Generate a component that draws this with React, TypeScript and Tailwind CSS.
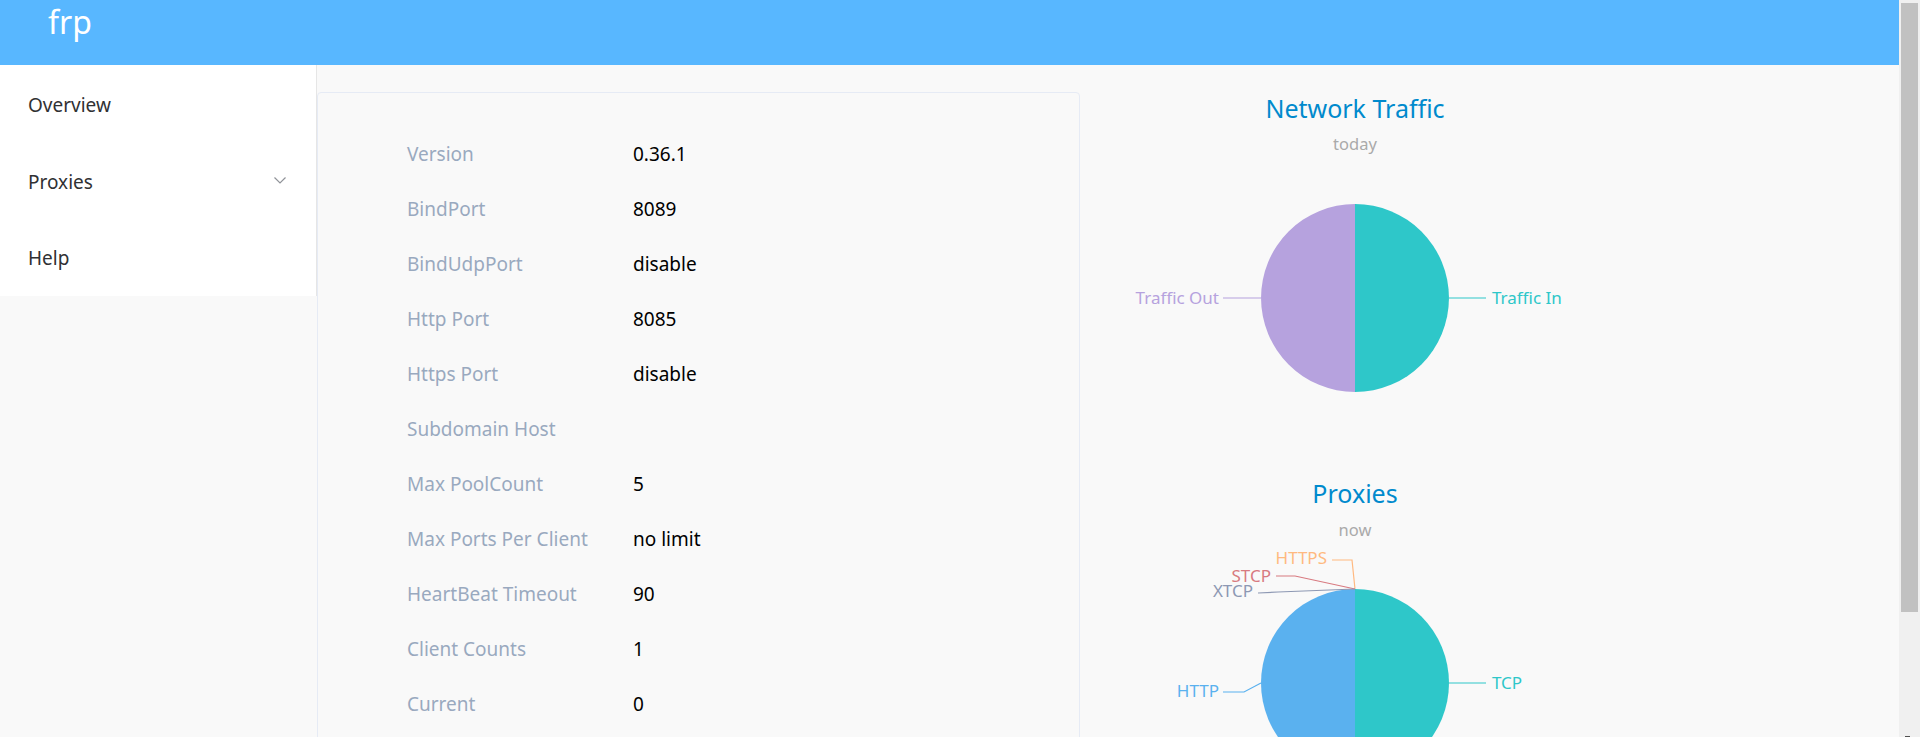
const serverInfo: [string, string][] = [
  ['Version', '0.36.1'],
  ['BindPort', '8089'],
  ['BindUdpPort', 'disable'],
  ['Http Port', '8085'],
  ['Https Port', 'disable'],
  ['Subdomain Host', ''],
  ['Max PoolCount', '5'],
  ['Max Ports Per Client', 'no limit'],
  ['HeartBeat Timeout', '90'],
  ['Client Counts', '1'],
  ['Current', '0'],
];

const FONT = '"Noto Sans", "Liberation Sans", sans-serif';

// half pie: left or right half of a circle
function halfPath(cx: number, cy: number, r: number, side: 'left' | 'right') {
  const sweep = side === 'right' ? 1 : 0;
  return `M${cx},${cy} L${cx},${cy - r} A${r},${r} 0 0 ${sweep} ${cx},${cy + r} Z`;
}

function TrafficChart() {
  const cx = 275;
  const cy = 233;
  const r = 94;
  return (
    <svg width={550} height={335} className="block" style={{ fontFamily: FONT }}>
      <text x={cx} y={53} textAnchor="middle" fontSize={25} fill="#008acd">Network Traffic</text>
      <text x={cx} y={85} textAnchor="middle" fontSize={16.5} fill="#aaaaaa">today</text>
      <path d={halfPath(cx, cy, r, 'left')} fill="#b6a2de" />
      <path d={halfPath(cx, cy, r, 'right')} fill="#2ec7c9" />
      <polyline points="181,233 143,233" fill="none" stroke="#b6a2de" strokeWidth={1.2} />
      <text x={139} y={239} textAnchor="end" fontSize={17} fill="#b6a2de">Traffic Out</text>
      <polyline points="369,233 406,233" fill="none" stroke="#2ec7c9" strokeWidth={1.2} />
      <text x={412} y={239} fontSize={17} fill="#2ec7c9">Traffic In</text>
    </svg>
  );
}

function ProxiesChart() {
  const cx = 275;
  const cy = 283;
  const r = 94;
  return (
    <svg width={550} height={400} className="block" style={{ fontFamily: FONT }}>
      <text x={cx} y={103} textAnchor="middle" fontSize={25} fill="#008acd">Proxies</text>
      <text x={cx} y={136} textAnchor="middle" fontSize={16.5} fill="#aaaaaa">now</text>
      <path d={halfPath(cx, cy, r, 'left')} fill="#5ab1ef" />
      <path d={halfPath(cx, cy, r, 'right')} fill="#2ec7c9" />

      <polyline points="275,189 272,160 252,160" fill="none" stroke="#ffb980" strokeWidth={1.2} />
      <text x={247} y={164} textAnchor="end" fontSize={17} fill="#ffb980">HTTPS</text>

      <polyline points="275,189 215,176 196,176" fill="none" stroke="#d87a80" strokeWidth={1.2} />
      <text x={191} y={182} textAnchor="end" fontSize={17} fill="#d87a80">STCP</text>

      <polyline points="275,189 198,192 178,193" fill="none" stroke="#8d98b3" strokeWidth={1.2} />
      <text x={173} y={197} textAnchor="end" fontSize={17} fill="#8d98b3">XTCP</text>

      <polyline points="181,283 164,292 143,292" fill="none" stroke="#5ab1ef" strokeWidth={1.2} />
      <text x={139} y={297} textAnchor="end" fontSize={17} fill="#5ab1ef">HTTP</text>

      <polyline points="369,283 406,283" fill="none" stroke="#2ec7c9" strokeWidth={1.2} />
      <text x={412} y={289} fontSize={17} fill="#2ec7c9">TCP</text>
    </svg>
  );
}

export default function App() {
  return (
    <div
      className="flex h-[737px] w-full overflow-hidden bg-[#f9f9f9]"
      style={{ fontFamily: FONT }}
    >
      <div className="flex min-w-0 flex-1 flex-col">
        {/* Header */}
        <header className="h-[65px] shrink-0 bg-[#58b7ff] pl-[48px]">
          <span className="block text-[32px] leading-[44px] text-white">frp</span>
        </header>

        <div className="flex flex-1 overflow-hidden">
          {/* Sidebar */}
          <aside className="w-[317px] shrink-0">
            <nav className="border-r border-[#e6e6e6] bg-white pt-[2px]">
              <div className="flex h-[77px] items-center pl-[28px] text-[19px] text-[#303133]">Overview</div>
              <div className="flex h-[77px] items-center justify-between pl-[28px] pr-[30px] text-[19px] text-[#303133]">
                <span>Proxies</span>
                <svg width="12" height="7" viewBox="0 0 12 7" className="mb-[5px]">
                  <polyline points="0.5,0.5 6,6 11.5,0.5" fill="none" stroke="#909399" strokeWidth={1.2} />
                </svg>
              </div>
              <div className="flex h-[75px] items-center pl-[28px] text-[19px] text-[#303133]">Help</div>
            </nav>
          </aside>

          {/* Main */}
          <main className="flex flex-1 items-start">
            <div className="mt-[27px] w-[763px] shrink-0 rounded-[4px] border border-[#e6ebf5] bg-[#f9f9f9] pb-[40px] pl-[89px] pt-[34px]">
              {serverInfo.map(([label, value]) => (
                <div key={label} className="flex h-[55px] items-center text-[19px]">
                  <span className="w-[226px] text-[#99a9bf]">{label}</span>
                  <span className="text-black">{value}</span>
                </div>
              ))}
            </div>

            <div className="flex w-[550px] shrink-0 flex-col">
              <TrafficChart />
              <ProxiesChart />
            </div>
          </main>
        </div>
      </div>

      {/* Scrollbar */}
      <div className="relative w-[21px] shrink-0 bg-[#f0f0f0]">
        <div className="ml-[2px] mt-[3px] h-[609px] w-[17px] bg-[#c1c1c1]" />
        <div className="absolute bottom-0 left-[6px] h-[1px] w-[5px] bg-[#505050]" />
      </div>
    </div>
  );
}
